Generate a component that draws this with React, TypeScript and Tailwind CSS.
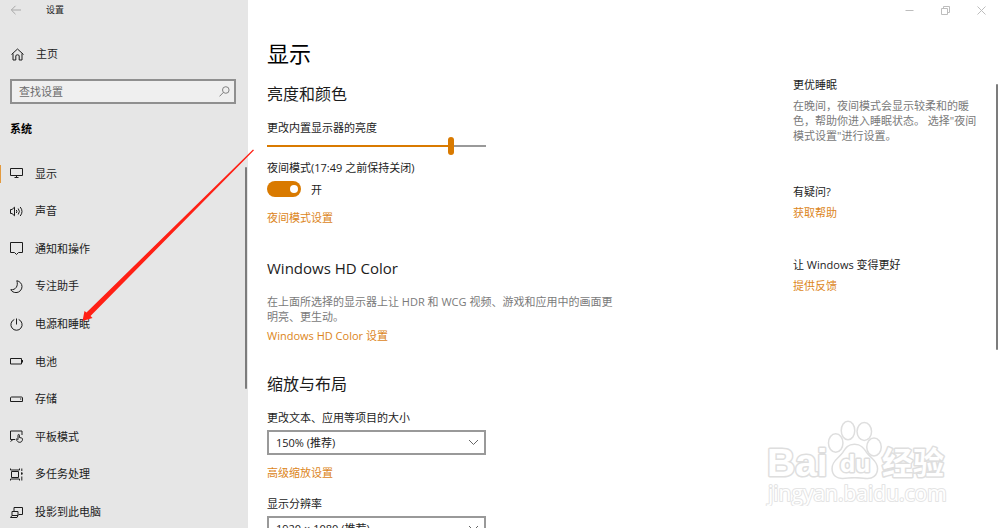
import { useState, type ReactNode } from 'react'

// 侧边栏图标，统一使用 13x13 的线条风格
function Icon({ children }: { children: ReactNode }) {
  return (
    <svg
      className="h-[13px] w-[13px] shrink-0"
      viewBox="0 0 13 13"
      fill="none"
      stroke="currentColor"
      strokeWidth="1"
      aria-hidden="true">
      {children}
    </svg>
  )
}

const navItems: { name: string; icon: ReactNode }[] = [
  {
    name: '显示',
    icon: <path d="M.5 1.5h12v7H.5zM4.5 10.500h4M6.5 8.500v2" />,
  },
  {
    name: '声音',
    icon: (
      <path d="M.5 4.500h1.500L4.500 2.200v8.600L2 8.500H.5zM6.300 5q1.200 1.500 0 3M8.200 3.500q2.400 3 0 6M10.200 2q3.600 4.500 0 9" />
    ),
  },
  {
    name: '通知和操作',
    icon: <path d="M.5 .5h12v10H8.500l-2 2-2-2h-4z" />,
  },
  {
    name: '专注助手',
    icon: (
      <path d="M6.800.7c3 .6 5.200 2.900 5.200 5.900a6 6 0 0 1-6 6C3.700 12.600 1.700 11.500.800 9.700c4.800.6 7.800-3.900 6-9z" />
    ),
  },
  {
    name: '电源和睡眠',
    icon: <path d="M6.500.5v6M4.300 1.500a5.600 5.600 0 1 0 4.400 0" />,
  },
  {
    name: '电池',
    icon: <path d="M.5 3.500h11v5.500H.5zM12.500 5v2.500" />,
  },
  {
    name: '存储',
    icon: <path d="M.5 5q0-1 1-1h10q1 0 1 1v3.500H.5zM10 6h1.300" />,
  },
  {
    name: '平板模式',
    icon: (
      <path d="M5 9.500H.5V1h11.500v4M.5 11.500L3 9.500M8 9.500V5.200c0-1 1.400-1 1.400 0V7.500l2.200.5c.7.200.9.600.9 1.200-.1 1.900-1 3.100-2.800 3.100-1.500 0-2.300-.8-3.700-3 .6-.6 1.300-.4 2 .5" />
    ),
  },
  {
    name: '多任务处理',
    icon: (
      <path d="M1.500 3.500h7v6h-7zM.5 .5v1.500h9V.5M.5 12.500V11h9v1.500M11.800.5v2.500M11.800 4v3M11.800 8.500v4M11 5.500h1.600" />
    ),
  },
  {
    name: '投影到此电脑',
    icon: <path d="M4 5.500V1.500h8.500v7H8.500M2 5.500h6v4H2zM.5 11.500l1.500-2h6l-1 2z" />,
  },
]

function Sidebar() {
  const [active, setActive] = useState('显示')

  return (
    <aside className="relative flex w-[248px] shrink-0 flex-col bg-[#e6e6e6] text-[#1c1c1c]">
      <div className="flex h-5 shrink-0 items-center gap-6 pl-[10px]">
        <button aria-label="返回" className="text-[#a8a8a8]">
          <svg className="h-3 w-3" viewBox="0 0 12 12" fill="none" stroke="currentColor" aria-hidden="true">
            <path d="M11 6H1.500M5.500 1.800L1.300 6l4.200 4.200" />
          </svg>
        </button>
        <span className="text-[9px]">设置</span>
      </div>

      <a href="#home" className="mt-6 flex h-5 shrink-0 items-center gap-3 pl-[11px]">
        <Icon>
          <path d="M.5 6.500l6-5.500 6 5.500M2 5.500v6.500h2.800V8q0-1.200 1.700-1.200T8.200 8v4H11V5.500" />
        </Icon>
        主页
      </a>

      <div className="relative mt-[15px] mr-3 ml-[10px] shrink-0">
        <input
          type="text"
          aria-label="查找设置"
          placeholder="查找设置"
          className="block h-[25px] w-full border-2 border-[#8f8f8f] bg-[#efefef] pr-6 pl-[7px] placeholder:text-[#6c6c6c] focus:outline-none"
        />
        <svg
          className="pointer-events-none absolute top-[7px] right-[6px] h-[11px] w-[11px] text-[#808080]"
          viewBox="0 0 11 11"
          fill="none"
          stroke="currentColor"
          aria-hidden="true">
          <circle cx="6.800" cy="4" r="3.300" />
          <path d="M4.400 6.400L.5 10.400" />
        </svg>
      </div>

      <h2 className="mt-[17px] pl-[10px] leading-[15px] font-bold text-black">系统</h2>

      <nav className="mt-[19px] flex h-[376px] shrink-0 flex-col">
        {navItems.map((item) => (
          <button
            key={item.name}
            onClick={() => setActive(item.name)}
            className="relative flex flex-1 items-center gap-3 pl-[10px] text-left">
            {item.name === active && (
              <span className="absolute left-0 h-[18px] w-px bg-[#e39a3f]" />
            )}
            <Icon>{item.icon}</Icon>
            {item.name}
          </button>
        ))}
      </nav>

      {/* 滚动条 */}
      <div className="absolute top-[167px] right-px h-[222px] w-[2px] rounded-full bg-[#7c7c7c]" />
    </aside>
  )
}

function WindowControls() {
  return (
    <div className="flex h-5 justify-end pr-px text-[#bdbdbd]">
      <button aria-label="最小化" className="flex w-9 items-center justify-center">
        <svg className="h-[11px] w-[11px]" viewBox="0 0 11 11" fill="none" stroke="currentColor">
          <path d="M1.500 5.500h8" />
        </svg>
      </button>
      <button aria-label="还原" className="flex w-9 items-center justify-center">
        <svg className="h-[11px] w-[11px]" viewBox="0 0 11 11" fill="none" stroke="currentColor">
          <path d="M1.500 3.500h6v6h-6zM3.500 3.500v-2h6v6h-2" />
        </svg>
      </button>
      <button aria-label="关闭" className="flex w-9 items-center justify-center">
        <svg className="h-[11px] w-[11px]" viewBox="0 0 11 11" fill="none" stroke="currentColor">
          <path d="M1.500 1.500l8 8M9.500 1.500l-8 8" />
        </svg>
      </button>
    </div>
  )
}

function Dropdown({ id, options }: { id: string; options: string[] }) {
  return (
    <div className="relative mt-[5px] w-[219px]">
      <select
        id={id}
        className="block h-[25px] w-full appearance-none border-2 border-[#999999] bg-white pr-6 pl-[7px] focus:outline-none">
        {options.map((option) => (
          <option key={option}>{option}</option>
        ))}
      </select>
      <svg
        className="pointer-events-none absolute top-[9px] right-[7px] h-[7px] w-[11px] text-[#666666]"
        viewBox="0 0 11 7"
        fill="none"
        stroke="currentColor"
        aria-hidden="true">
        <path d="M1 1l4.500 4.500L10 1" />
      </svg>
    </div>
  )
}

function DisplaySettings() {
  const [nightMode, setNightMode] = useState(true)

  return (
    <section className="w-[350px] leading-[15px]">
      <h1 className="text-[22px] leading-7 text-black">显示</h1>

      <h2 className="mt-[17px] text-base leading-5">亮度和颜色</h2>
      <label htmlFor="brightness" className="mt-4 block">
        更改内置显示器的亮度
      </label>
      <input
        id="brightness"
        type="range"
        min={0}
        max={100}
        defaultValue={85}
        className="mt-px block h-[19px] w-[219px] appearance-none bg-transparent [&::-webkit-slider-runnable-track]:h-[2px] [&::-webkit-slider-runnable-track]:bg-[linear-gradient(to_right,#d97a00_85%,#999999_85%)] [&::-webkit-slider-thumb]:mt-[-8px] [&::-webkit-slider-thumb]:h-[18px] [&::-webkit-slider-thumb]:w-[6px] [&::-webkit-slider-thumb]:appearance-none [&::-webkit-slider-thumb]:rounded-full [&::-webkit-slider-thumb]:bg-[#d97a00]"
      />
      <label htmlFor="night" className="mt-[5px] block">
        夜间模式(17:49 之前保持关闭)
      </label>
      <div className="mt-[6px] flex h-4 items-center gap-[10px]">
        <input
          id="night"
          type="checkbox"
          checked={nightMode}
          onChange={(e) => setNightMode(e.target.checked)}
          className="flex h-4 w-[34px] appearance-none items-center rounded-full bg-[#999999] px-[3px] before:h-2 before:w-2 before:rounded-full before:bg-white checked:justify-end checked:bg-[#d97a00]"
        />
        <span>{nightMode ? '开' : '关'}</span>
      </div>
      <a href="#night" className="mt-[13px] block text-[#dc851a]">
        夜间模式设置
      </a>

      <h2 className="mt-[33px] text-[15px] leading-5">Windows HD Color</h2>
      <p className="mt-4 text-[#7a7a7a]">
        在上面所选择的显示器上让 HDR 和 WCG 视频、游戏和应用中的画面更明亮、更生动。
      </p>
      <a href="#hd-color" className="mt-1 block text-[#dc851a]">
        Windows HD Color 设置
      </a>

      <h2 className="mt-[31px] text-base leading-5">缩放与布局</h2>
      <label htmlFor="scale" className="mt-4 block">
        更改文本、应用等项目的大小
      </label>
      <Dropdown id="scale" options={['150% (推荐)']} />
      <a href="#scaling" className="mt-[10px] block text-[#dc851a]">
        高级缩放设置
      </a>
      <label htmlFor="resolution" className="mt-4 block">
        显示分辨率
      </label>
      <Dropdown id="resolution" options={['1920 × 1080 (推荐)']} />
    </section>
  )
}

function HelpPanel() {
  return (
    <section className="w-[188px] pt-[38px] leading-[15px]">
      <h3>更优睡眠</h3>
      <p className="mt-[6px] text-[#7a7a7a]">
        在晚间，夜间模式会显示较柔和的暖色，帮助你进入睡眠状态。 选择"夜间模式设置"进行设置。
      </p>
      <h3 className="mt-[41px]">有疑问?</h3>
      <a href="#help" className="mt-[6px] block text-[#dc851a]">
        获取帮助
      </a>
      <h3 className="mt-[37px]">让 Windows 变得更好</h3>
      <a href="#feedback" className="mt-[6px] block text-[#dc851a]">
        提供反馈
      </a>
    </section>
  )
}

// 右下角水印，描边画在填充下面
function Watermark() {
  return (
    <svg
      className="pointer-events-none absolute right-[46px] bottom-[22px] h-[90px] w-[190px] [paint-order:stroke]"
      viewBox="0 0 190 90"
      fill="#ffffff"
      stroke="#dedede"
      strokeWidth="3"
      strokeLinejoin="round">
      <text x="3" y="60" className="font-['Liberation_Sans'] text-[39px] font-bold">
        Bai
      </text>
      <ellipse cx="71.700" cy="27" rx="6.500" ry="8.500" />
      <ellipse cx="84" cy="14.500" rx="6" ry="8.500" />
      <ellipse cx="100.300" cy="15.500" rx="6.500" ry="8.200" />
      <ellipse cx="110" cy="31" rx="6.500" ry="8.200" />
      <path d="M90.500 29c6 0 8.500 3.500 11.500 8 3.500 5 10.800 8.500 10.800 15.500 0 7-5 9.500-10 9.200-4.300-.3-7.500-.7-12-.7s-7.800.6-12 .7c-5.500.2-10-2.500-10-9.200 0-7 7-10.500 10.500-15.500 3-4.700 5.200-8 11.200-8z" />
      <text x="76" y="56" className="font-['Inter'] text-[24px] font-bold">
        du
      </text>
      <text x="118" y="58" className="font-['Noto_Sans_CJK_SC'] text-[31px] font-bold">
        经验
      </text>
      <text x="4" y="85" className="font-['Open_Sans'] text-[21px]" stroke="#e4e4e4" strokeWidth="2">
        jingyan.baidu.com
      </text>
    </svg>
  )
}

function App() {
  return (
    <div className="relative flex h-screen overflow-hidden bg-white font-['Open_Sans','Noto_Sans_CJK_SC',sans-serif] text-[11px] text-[#1c1c1c]">
      <Sidebar />

      <main className="flex-1">
        <WindowControls />
        <div className="flex justify-between pt-[19px] pr-[19px] pl-[19px]">
          <DisplaySettings />
          <HelpPanel />
        </div>
      </main>

      <div className="absolute top-[84px] right-[2px] h-[266px] w-[2px] rounded-full bg-[#7c7c7c]" />
      <Watermark />

      {/* 指向“电源和睡眠”的红色箭头 */}
      <svg
        className="pointer-events-none absolute top-[148px] left-[80px] h-[176px] w-[176px]"
        viewBox="0 0 176 176"
        fill="#ff2015"
        aria-hidden="true">
        <path d="M173 1.500L174 2.300 10.500 168 12.500 170 2.500 173 4.500 163 6.500 164.500z" />
      </svg>
    </div>
  )
}

export default App
